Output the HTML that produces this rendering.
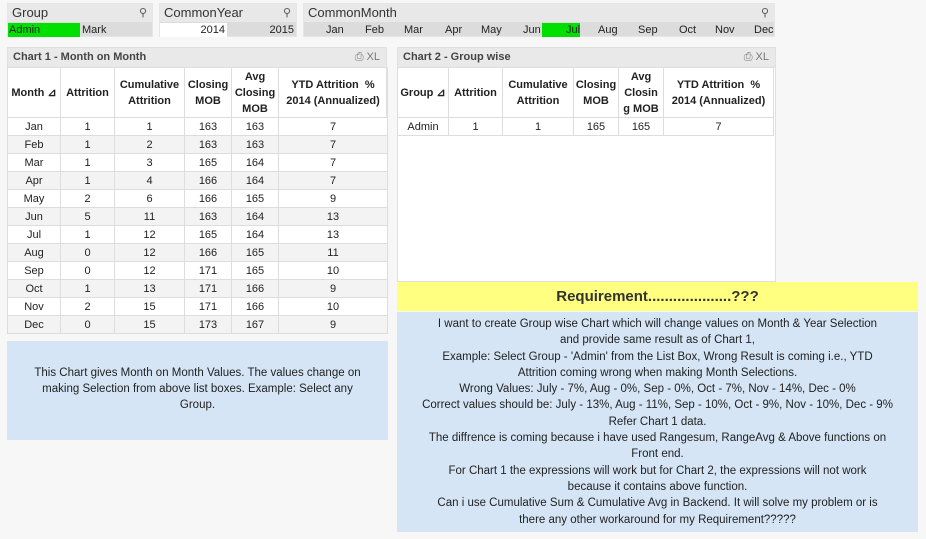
<!DOCTYPE html>
<html><head><meta charset="utf-8"><style>
*{margin:0;padding:0;box-sizing:border-box}
body{width:926px;height:539px;background:#f7f7f7;font-family:"Liberation Sans",sans-serif;font-size:11px;color:#222;position:relative;overflow:hidden}
.a{position:absolute}
.lb{background:#dcdcdc;border:1px solid #e6e6e6}
.lbt{position:absolute;left:0;top:0;right:0;height:18px;background:#e8e8e8;font-size:13px;color:#333;padding:1px 4px}
.srch{position:absolute;right:5px;top:2px;font-size:11px;color:#555}
.it{position:absolute;top:19px;height:14px;line-height:14px;font-size:11px}
.ct{background:#fff;border:1px solid #e0e0e0}
.cth{position:absolute;left:0;top:0;right:0;height:20px;background:#e9e9e9;font-weight:bold;font-size:11px;color:#444;padding:3px 5px}
.cth .ic{position:absolute;right:6px;top:3px;font-weight:normal;color:#777}
table{position:absolute;border-collapse:collapse;table-layout:fixed}
td,th{border:1px solid #ddd;text-align:center;font-size:11px;height:18px;padding:0;overflow:hidden;white-space:nowrap}
th{height:50px;font-weight:bold;white-space:normal;line-height:16px;color:#222}
tr:nth-child(odd) td{background:#f3f3f3}
tr:nth-child(even) td{background:#fff}
.blue{background:#d5e5f5;text-align:center;color:#222;font-size:11.5px}
</style></head><body>

<div class="a lb" style="left:7px;top:3px;width:146px;height:34px">
<div class="lbt">Group<span class="srch">⚲</span></div>
<div class="it" style="left:0;width:72px;background:#00e000;padding-left:1px">Admin</div>
<div class="it" style="left:73px;padding-left:1px">Mark</div>
</div>

<div class="a lb" style="left:159px;top:3px;width:138px;height:34px">
<div class="lbt">CommonYear<span class="srch">⚲</span></div>
<div class="it" style="left:0;width:67px;background:#fff;text-align:right;padding-right:2px">2014</div>
<div class="it" style="left:67px;width:69px;text-align:right;padding-right:2px">2015</div>
</div>

<div class="a lb" style="left:303px;top:3px;width:472px;height:34px">
<div class="lbt">CommonMonth<span class="srch">⚲</span></div>
<div class="it" style="left:238px;width:38px;background:#00e000"></div>
<div class="it" style="left:22px">Jan</div><div class="it" style="left:61px">Feb</div><div class="it" style="left:100px">Mar</div><div class="it" style="left:141px">Apr</div><div class="it" style="left:177px">May</div><div class="it" style="left:219px">Jun</div><div class="it" style="left:262px">Jul</div><div class="it" style="left:294px">Aug</div><div class="it" style="left:334px">Sep</div><div class="it" style="left:375px">Oct</div><div class="it" style="left:411px">Nov</div><div class="it" style="left:450px">Dec</div>
</div>

<div class="a ct" style="left:7px;top:47px;width:380px;height:287px">
<div class="cth">Chart 1 - Month on Month<span class="ic">⎙ XL</span></div>
<table style="left:-1px;top:19px;width:380px">
<colgroup><col style="width:53px"><col style="width:54px"><col style="width:70px"><col style="width:47px"><col style="width:47px"><col style="width:109px"></colgroup>
<tr><th>Month ⊿</th><th>Attrition</th><th>Cumulative Attrition</th><th>Closing MOB</th><th>Avg Closing MOB</th><th>YTD Attrition&nbsp; % 2014 (Annualized)</th></tr>
<tr><td>Jan</td><td>1</td><td>1</td><td>163</td><td>163</td><td>7</td></tr>
<tr><td>Feb</td><td>1</td><td>2</td><td>163</td><td>163</td><td>7</td></tr>
<tr><td>Mar</td><td>1</td><td>3</td><td>165</td><td>164</td><td>7</td></tr>
<tr><td>Apr</td><td>1</td><td>4</td><td>166</td><td>164</td><td>7</td></tr>
<tr><td>May</td><td>2</td><td>6</td><td>166</td><td>165</td><td>9</td></tr>
<tr><td>Jun</td><td>5</td><td>11</td><td>163</td><td>164</td><td>13</td></tr>
<tr><td>Jul</td><td>1</td><td>12</td><td>165</td><td>164</td><td>13</td></tr>
<tr><td>Aug</td><td>0</td><td>12</td><td>166</td><td>165</td><td>11</td></tr>
<tr><td>Sep</td><td>0</td><td>12</td><td>171</td><td>165</td><td>10</td></tr>
<tr><td>Oct</td><td>1</td><td>13</td><td>171</td><td>166</td><td>9</td></tr>
<tr><td>Nov</td><td>2</td><td>15</td><td>171</td><td>166</td><td>10</td></tr>
<tr><td>Dec</td><td>0</td><td>15</td><td>173</td><td>167</td><td>9</td></tr>
</table>
</div>

<div class="a blue" style="left:7px;top:341px;width:381px;height:99px;padding-top:24px;line-height:16px">This Chart gives Month on Month Values. The values change on<br>making Selection from above list boxes. Example: Select any<br>Group.</div>

<div class="a ct" style="left:397px;top:47px;width:379px;height:235px">
<div class="cth">Chart 2 - Group wise<span class="ic">⎙ XL</span></div>
<table style="left:-1px;top:19px;width:376px">
<colgroup><col style="width:51px"><col style="width:54px"><col style="width:71px"><col style="width:45px"><col style="width:45px"><col style="width:110px"></colgroup>
<tr><th>Group ⊿</th><th>Attrition</th><th>Cumulative Attrition</th><th>Closing MOB</th><th>Avg<br>Closin<br>g MOB</th><th>YTD Attrition&nbsp; % 2014 (Annualized)</th></tr>
<tr><td style="background:#fff">Admin</td><td style="background:#fff">1</td><td style="background:#fff">1</td><td style="background:#fff">165</td><td style="background:#fff">165</td><td style="background:#fff">7</td></tr>
</table>
</div>

<div class="a" style="left:397px;top:282px;width:521px;height:29px;background:#ffff80;text-align:center;font-weight:bold;font-size:15px;line-height:29px;color:#333">Requirement....................???</div>

<div class="a blue" style="left:397px;top:312px;width:521px;height:220px;padding-top:4px;line-height:16.3px;white-space:nowrap">I want to create Group wise Chart which will change values on Month &amp; Year Selection<br>and provide same result as of Chart 1,<br>Example: Select Group - 'Admin' from the List Box, Wrong Result is coming i.e., YTD<br>Attrition coming wrong when making Month Selections.<br>Wrong Values: July - 7%, Aug - 0%, Sep - 0%, Oct - 7%, Nov - 14%, Dec - 0%<br>Correct values should be: July - 13%, Aug - 11%, Sep - 10%, Oct - 9%, Nov - 10%, Dec - 9%<br>Refer Chart 1 data.<br>The diffrence is coming because i have used Rangesum, RangeAvg &amp; Above functions on<br>Front end.<br>For Chart 1 the expressions will work but for Chart 2, the expressions will not work<br>because it contains above function.<br>Can i use Cumulative Sum &amp; Cumulative Avg in Backend. It will solve my problem or is<br>there any other workaround for my Requirement?????</div>

</body></html>
